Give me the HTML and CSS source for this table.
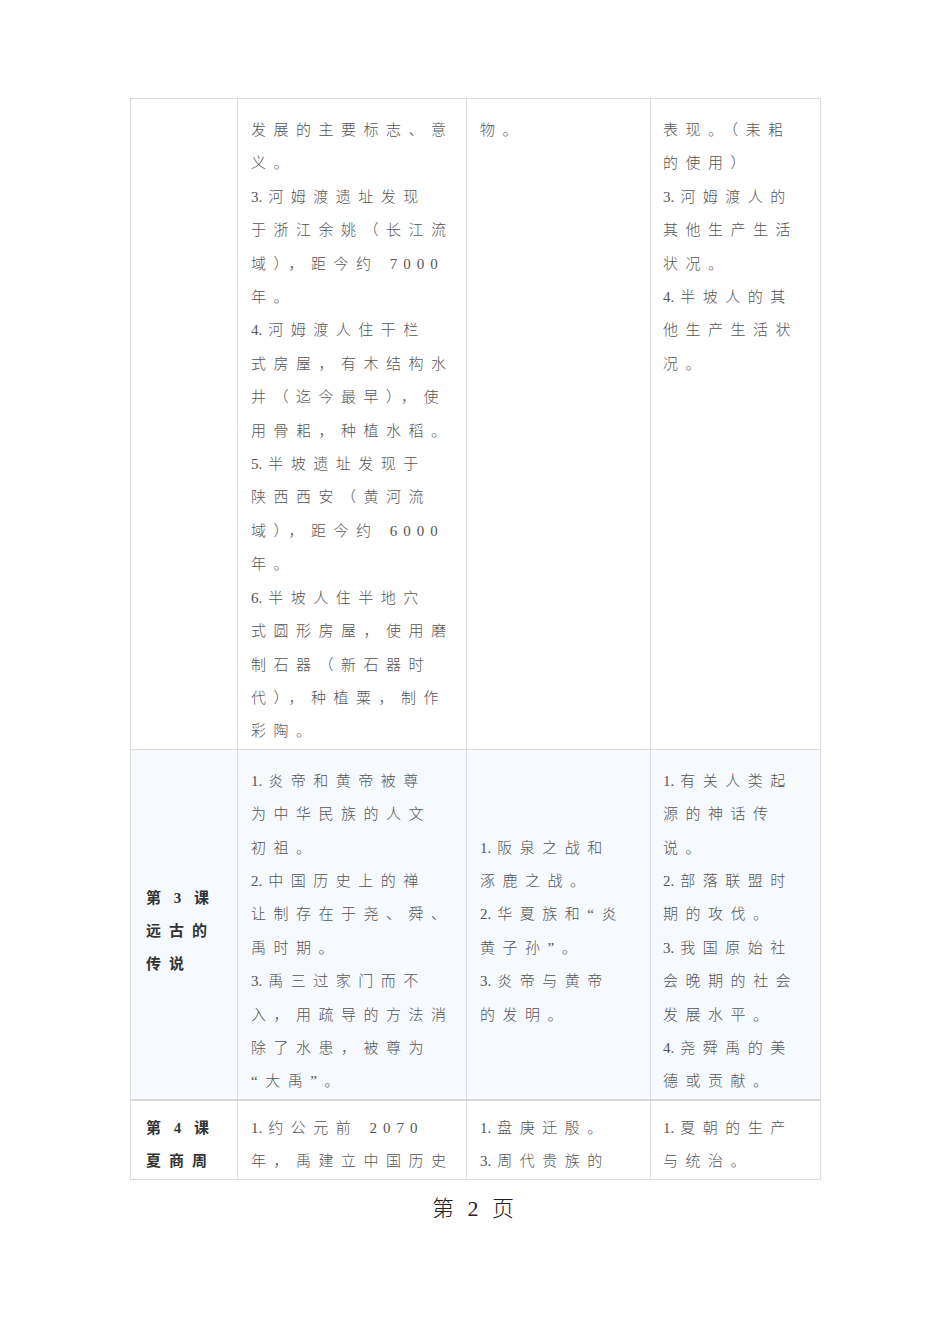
FILE: index.html
```html
<!DOCTYPE html>
<html lang="zh">
<head>
<meta charset="utf-8">
<title>第 2 页</title>
<link rel="stylesheet" href="styles.css">
</head>
<body>
<div class="page">
<table class="grid">
<colgroup>
<col class="c1"><col class="c2"><col class="c3"><col class="c4">
</colgroup>
<tr class="row-cont">
<td class="head"></td>
<td><span class="ln">发展的主要标志、意</span><span class="ln">义。</span><span class="ln"><span class="n">3.</span>河姆渡遗址发现</span><span class="ln">于浙江余姚（长江流</span><span class="ln">域），距今约 <span class="d">7000</span></span><span class="ln">年。</span><span class="ln"><span class="n">4.</span>河姆渡人住干栏</span><span class="ln">式房屋，有木结构水</span><span class="ln">井（迄今最早），使</span><span class="ln">用骨耜，种植水稻。</span><span class="ln"><span class="n">5.</span>半坡遗址发现于</span><span class="ln">陕西西安（黄河流</span><span class="ln">域），距今约 <span class="d">6000</span></span><span class="ln">年。</span><span class="ln"><span class="n">6.</span>半坡人住半地穴</span><span class="ln">式圆形房屋，使用磨</span><span class="ln">制石器（新石器时</span><span class="ln">代），种植粟，制作</span><span class="ln">彩陶。</span></td>
<td><span class="ln">物。</span></td>
<td><span class="ln">表现。（耒耜</span><span class="ln">的使用）</span><span class="ln"><span class="n">3.</span>河姆渡人的</span><span class="ln">其他生产生活</span><span class="ln">状况。</span><span class="ln"><span class="n">4.</span>半坡人的其</span><span class="ln">他生产生活状</span><span class="ln">况。</span></td>
</tr>
<tr class="row-alt">
<td class="head"><span class="ln">第 3 课</span><span class="ln">远古的</span><span class="ln">传说</span></td>
<td><span class="ln"><span class="n">1.</span>炎帝和黄帝被尊</span><span class="ln">为中华民族的人文</span><span class="ln">初祖。</span><span class="ln"><span class="n">2.</span>中国历史上的禅</span><span class="ln">让制存在于尧、舜、</span><span class="ln">禹时期。</span><span class="ln"><span class="n">3.</span>禹三过家门而不</span><span class="ln">入，用疏导的方法消</span><span class="ln">除了水患，被尊为</span><span class="ln">“大禹”。</span></td>
<td><span class="ln"><span class="n">1.</span>阪泉之战和</span><span class="ln">涿鹿之战。</span><span class="ln"><span class="n">2.</span>华夏族和“炎</span><span class="ln">黄子孙”。</span><span class="ln"><span class="n">3.</span>炎帝与黄帝</span><span class="ln">的发明。</span></td>
<td><span class="ln"><span class="n">1.</span>有关人类起</span><span class="ln">源的神话传</span><span class="ln">说。</span><span class="ln"><span class="n">2.</span>部落联盟时</span><span class="ln">期的攻伐。</span><span class="ln"><span class="n">3.</span>我国原始社</span><span class="ln">会晚期的社会</span><span class="ln">发展水平。</span><span class="ln"><span class="n">4.</span>尧舜禹的美</span><span class="ln">德或贡献。</span></td>
</tr>
<tr class="row-cut">
<td class="head"><span class="ln">第 4 课</span><span class="ln">夏商周</span></td>
<td><span class="ln"><span class="n">1.</span>约公元前 <span class="d">2070</span></span><span class="ln">年，禹建立中国历史</span></td>
<td><span class="ln"><span class="n">1.</span>盘庚迁殷。</span><span class="ln"><span class="n">3.</span>周代贵族的</span></td>
<td><span class="ln"><span class="n">1.</span>夏朝的生产</span><span class="ln">与统治。</span></td>
</tr>
</table>
<div class="footer">第 2 页</div>
</div>
</body>
</html>
```

FILE: styles.css
```css
html, body {
  margin: 0;
  padding: 0;
  background: #ffffff;
}

.page {
  padding-top: 98px;
  padding-left: 130px;
}

.grid {
  width: 690px;
  table-layout: fixed;
  border-collapse: collapse;
  font-family: "Liberation Serif", "Noto Sans CJK SC", serif;
  font-weight: 300;
  font-size: 15px;
  color: #555555;
  letter-spacing: 7.5px;
}

.c1 { width: 107px; }
.c2 { width: 229px; }
.c3 { width: 184px; }
.c4 { width: 170px; }

.grid td {
  border: 1px solid #dcdcdc;
  padding: 15px 0 0 13px;
  line-height: 33.4px;
  white-space: nowrap;
  overflow: hidden;
}

.grid td:nth-child(4) {
  padding-left: 12px;
}

.grid td.head {
  padding-left: 15px;
  font-weight: 700;
  color: #333333;
  letter-spacing: 8px;
  word-spacing: -7px;
}

.ln {
  display: block;
}

.n {
  letter-spacing: 0;
  margin-right: 6px;
}

.d {
  letter-spacing: 6px;
}

.row-cont td {
  vertical-align: top;
  background: #ffffff;
}

.row-alt td {
  vertical-align: middle;
  background: #f6f9fe;
}

.row-cut td {
  vertical-align: top;
  background: #ffffff;
  padding-top: 11px;
  border-top: 2px solid #d8d8d8;
  height: 67px;
}

.footer {
  width: 690px;
  text-align: center;
  font-family: "Liberation Serif", "Noto Sans CJK SC", serif;
  font-weight: 300;
  font-size: 22px;
  letter-spacing: 4px;
  color: #222222;
  margin-top: 14px;
  line-height: 30px;
}
```
